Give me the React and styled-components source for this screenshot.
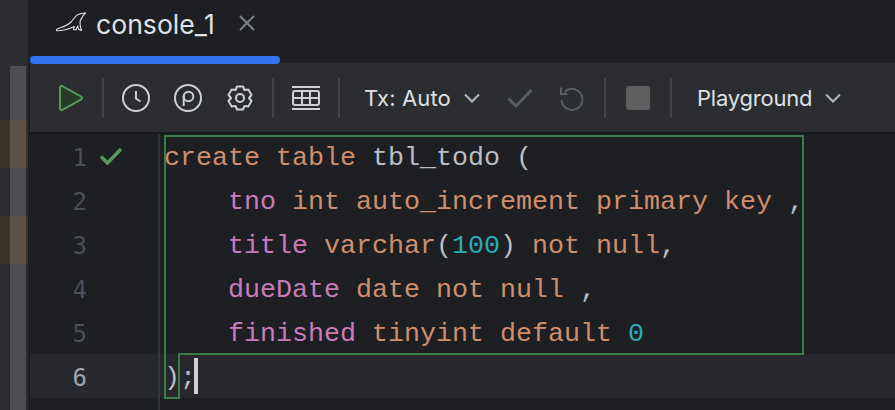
import React from "react";
import styled, { createGlobalStyle } from "styled-components";

const Global = createGlobalStyle`
  html, body { margin: 0; padding: 0; background: #1e1f22; }
  body { width: 895px; height: 410px; overflow: hidden; font-family: Inter, "Liberation Sans", sans-serif; }
`;
const Page = styled.div`display:flex;width:895px;height:410px;background:#1e1f22;overflow:hidden;`;
const Rail = styled.aside`position:relative;width:28px;flex:none;display:flex;flex-direction:column;background:#2b2d30;`;
const Band = styled.div`height:${p => p.$h}px;flex:none;background:${p => (p.$warn ? "#3d3226" : "transparent")};`;
const Thumb = styled.div`position:absolute;left:10px;top:66px;bottom:0;width:16px;background:rgba(255,255,255,.16);`;
const Main = styled.main`flex:1;min-width:0;margin-left:2px;display:flex;flex-direction:column;`;
const TabBar = styled.div`height:56px;flex:none;display:flex;align-items:center;padding:0 0 8px 25px;box-sizing:border-box;`;
const TabTitle = styled.span`margin-left:9px;color:#dfe1e5;font-size:26.6px;line-height:32px;`;
const Indicator = styled.div`height:8px;width:250px;flex:none;background:#3574f0;border-radius:4px;margin-bottom:-1px;position:relative;`;
const Toolbar = styled.div`height:69px;flex:none;display:flex;align-items:center;background:#2b2d30;border-bottom:2px solid #18191b;padding-left:28px;`;
const Slot = styled.div`width:${p => p.$w}px;margin-left:${p => p.$ml || 0}px;height:28px;flex:none;display:flex;align-items:center;justify-content:center;`;
const CloseSlot = styled(Slot)`margin-top:-3px;`;
const Sep = styled.div`width:2px;height:40px;flex:none;background:#43454a;margin-left:${p => p.$ml}px;`;
const Label = styled.span`color:#dfe1e5;font-size:22px;letter-spacing:${p => p.$ls || 0}px;line-height:28px;margin-left:${p => p.$ml}px;white-space:nowrap;flex:none;`;
const Editor = styled.div`position:relative;flex:1;display:flex;`;
const Gutter = styled.div`width:128px;flex:none;border-right:2px solid #313438;`;
const Code = styled.div`padding-left:5px;flex:1;`;
const NumRow = styled.div`height:44px;display:flex;align-items:center;background:${p => (p.$current ? "#26282e" : "transparent")};`;
const LineNo = styled.span`width:56px;height:44px;text-align:right;flex:none;color:${p => (p.$current ? "#a1a3ab" : "#4b5059")};font:24px/48px "DejaVu Sans Mono","Liberation Mono",monospace;letter-spacing:-1px;`;
const Line = styled.div`height:44px;white-space:pre;margin-left:-5px;padding-left:5px;font:26.67px/48px "Liberation Mono",monospace;color:#bcbec4;background:${p => (p.$current ? "#26282e" : "transparent")};`;
const Lead = styled.span`margin-left:-1px;`;
const Kw = styled.span`color:#cf8e6d;`;
const Field = styled.span`color:#c77dbb;`;
const Num = styled.span`color:#2aacb8;`;
const Caret = styled.span`display:inline-block;width:4px;height:36px;margin-left:-2px;background:#ced0d6;vertical-align:-9px;`;
const Outline = styled.svg`position:absolute;left:0;top:0;pointer-events:none;`;

const Icon = ({ w = 28, h = 28, vb, children, ...rest }) => (
  <svg width={w} height={h} viewBox={vb || `0 0 ${w} ${h}`} fill="none" {...rest}>{children}</svg>
);
const Chevron = ({ ml }) => (
  <Slot $w={18} $ml={ml}>
    <Icon w={18} h={12}><path d="M2 2.500 9 9.500 16 2.500" stroke="#b4b8bf" strokeWidth="2" /></Icon>
  </Slot>
);

const Seal = () => (
  <Icon w={32} h={24}>
    <path d="M1.500 18.500C1 17 3 16.500 6 15.500c4-1.300 7.500-3 10-5.500 2.500-2.500 4-6 7-7.500C25.500 1.500 28 1.200 30.500.8c-.5 1.200-1.300 2-2.500 2.800-.5 2-2.300 3.500-2.800 5.400-.5 2.500.3 6.500 1.300 9.500l-3-1.200-.8-3.300-1.700 4-2.500-.5.800-3c-3 1.500-6.500 2.800-10 3.500-3 .6-6.500 1.200-7.800.5Z" stroke="#dfe1e5" strokeWidth="1.100" strokeLinejoin="round" />
  </Icon>
);

const code = [
  <><Kw>create table </Kw>tbl_todo (</>,
  <>    <Field>tno</Field> <Kw>int auto_increment primary key</Kw> ,</>,
  <>    <Field>title</Field> <Kw>varchar</Kw>(<Num>100</Num>) <Kw>not null</Kw>,</>,
  <>    <Field>dueDate</Field> <Kw>date not null</Kw> ,</>,
  <>    <Field>finished</Field> <Kw>tinyint default</Kw> <Num>0</Num></>,
  <>);<Caret /></>,
];

export default function App() {
  return (
    <Page>
      <Global />
      <Rail>
        <Band $h={120} /><Band $h={48} $warn /><Band $h={48} /><Band $h={48} $warn /><Band $h={146} />
        <Thumb />
      </Rail>
      <Main>
        <TabBar>
          <Seal />
          <TabTitle>console_1</TabTitle>
          <CloseSlot $w={16} $ml={24}>
            <Icon w={16} h={16}><path d="M1 1 15 15M15 1 1 15" stroke="#7f8288" strokeWidth="2" /></Icon>
          </CloseSlot>
        </TabBar>
        <Indicator />
        <Toolbar>
          <Slot $w={26}>
            <Icon w={26} h={28}><path d="M2 3.500c0-1.300 1.300-2 2.400-1.400l18.800 10.500c1.100.6 1.100 2.200 0 2.800L4.400 25.900C3.300 26.500 2 25.800 2 24.500Z" fill="#27392b" stroke="#57965c" strokeWidth="2" /></Icon>
          </Slot>
          <Sep $ml={18} />
          <Slot $w={28} $ml={18}>
            <Icon w={28} h={28}><circle cx="14" cy="14" r="13" stroke="#ced0d6" strokeWidth="2" /><path d="M14 7v7.500l4.500 3" stroke="#ced0d6" strokeWidth="2" /></Icon>
          </Slot>
          <Slot $w={28} $ml={24}>
            <Icon w={28} h={28}><circle cx="14" cy="14" r="13" stroke="#ced0d6" strokeWidth="2" /><circle cx="14.500" cy="12.500" r="4.800" stroke="#ced0d6" strokeWidth="2" /><path d="M9.700 12v10" stroke="#ced0d6" strokeWidth="2" /></Icon>
          </Slot>
          <Slot $w={28} $ml={24}>
            <Icon w={28} h={28}><path d="M11 2.500h6l1.500 3.500 3.800-.5L25.500 11 23 14l2.500 3-3.200 5.500-3.800-.5-1.500 3.500h-6L9.500 22l-3.800.5L2.500 17 5 14l-2.500-3 3.200-5.500 3.800.5Z" stroke="#ced0d6" strokeWidth="2" strokeLinejoin="round" /><circle cx="14" cy="14" r="4" stroke="#ced0d6" strokeWidth="2" /></Icon>
          </Slot>
          <Sep $ml={18} />
          <Slot $w={28} $ml={18}>
            <Icon w={28} h={24}><path d="M0 1h28M0 23h28" stroke="#ced0d6" strokeWidth="2" /><rect x="1" y="5" width="26" height="14" rx="2" stroke="#ced0d6" strokeWidth="2" /><path d="M1 12h26M10 5v14M18 5v14" stroke="#ced0d6" strokeWidth="2" /></Icon>
          </Slot>
          <Sep $ml={18} />
          <Label $ml={24} $ls={0.15}>Tx: Auto</Label>
          <Chevron ml={12} />
          <Slot $w={26} $ml={26}>
            <Icon w={26} h={20}><path d="M1.500 10.500 9 18 24.500 2" stroke="#5a5d61" strokeWidth="3" /></Icon>
          </Slot>
          <Slot $w={24} $ml={26}>
            <Icon w={24} h={26}><path d="M5.500 7A10.500 10.500 0 1 1 2.500 15M2 2.500V9h6.500" stroke="#5a5d61" strokeWidth="2" /></Icon>
          </Slot>
          <Sep $ml={21} />
          <Slot $w={24} $ml={20}>
            <Icon w={24} h={24}><rect width="24" height="24" rx="3" fill="#5f5f5f" /></Icon>
          </Slot>
          <Sep $ml={20} />
          <Label $ml={25} $ls={-0.2}>Playground</Label>
          <Chevron ml={12} />
        </Toolbar>
        <Editor>
          <Gutter>
            {code.map((_, i) => (
              <NumRow key={i} $current={i === 5}>
                <LineNo $current={i === 5}>{i + 1}</LineNo>
                {i === 0 && (
                  <Slot $w={24} $ml={13}>
                    <Icon w={24} h={18}><path d="M2 9.500 8.500 16 22 2" stroke="#57965c" strokeWidth="3.500" /></Icon>
                  </Slot>
                )}
              </NumRow>
            ))}
          </Gutter>
          <Code>
            {code.map((c, i) => <Line key={i} $current={i === 5}><Lead>{c}</Lead></Line>)}
          </Code>
          <Outline width="865" height="276">
            <path d="M135 2H773V220H149V264H135Z" stroke="#3c7a48" strokeWidth="2" fill="none" />
          </Outline>
        </Editor>
      </Main>
    </Page>
  );
}
